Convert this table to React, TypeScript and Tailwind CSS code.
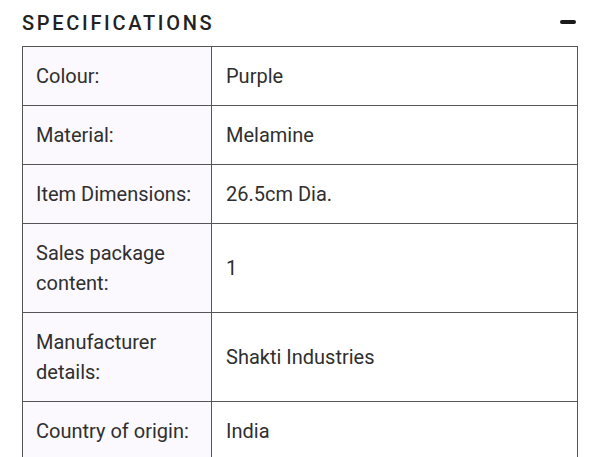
import React from 'react';

const specs: [string, string][] = [
  ['Colour:', 'Purple'],
  ['Material:', 'Melamine'],
  ['Item Dimensions:', '26.5cm Dia.'],
  ['Sales package content:', '1'],
  ['Manufacturer details:', 'Shakti Industries'],
  ['Country of origin:', 'India'],
];

const App: React.FC = () => {
  return (
    <div className="min-h-screen bg-white font-['Roboto',sans-serif] text-[#2f2f2f]">
      <div className="px-[22px]">
        {/* Header */}
        <div className="flex items-center justify-between h-[46px] pb-[1px]">
          <h2 className="text-[20px] font-medium tracking-[2.7px] text-[#222] leading-none">SPECIFICATIONS</h2>
          <span className="block w-[16px] h-[4px] rounded-[2px] bg-[#1a1a1a] mr-[2px] mb-[2px]"></span>
        </div>

        {/* Table */}
        <table className="w-full border-collapse border border-[#555] text-[20px] leading-[30px]">
          <tbody>
            {specs.map(([label, value]) => (
              <tr key={label} className="border-b border-[#555]">
                <td className="w-[189px] bg-[#fbf9fd] border-r border-[#555] pl-[13px] pr-[12px] py-[14px] align-middle">
                  {label}
                </td>
                <td className="pl-[14px] pr-3 py-[14px] align-middle">{value}</td>
              </tr>
            ))}
          </tbody>
        </table>
      </div>
    </div>
  );
};

export default App;
